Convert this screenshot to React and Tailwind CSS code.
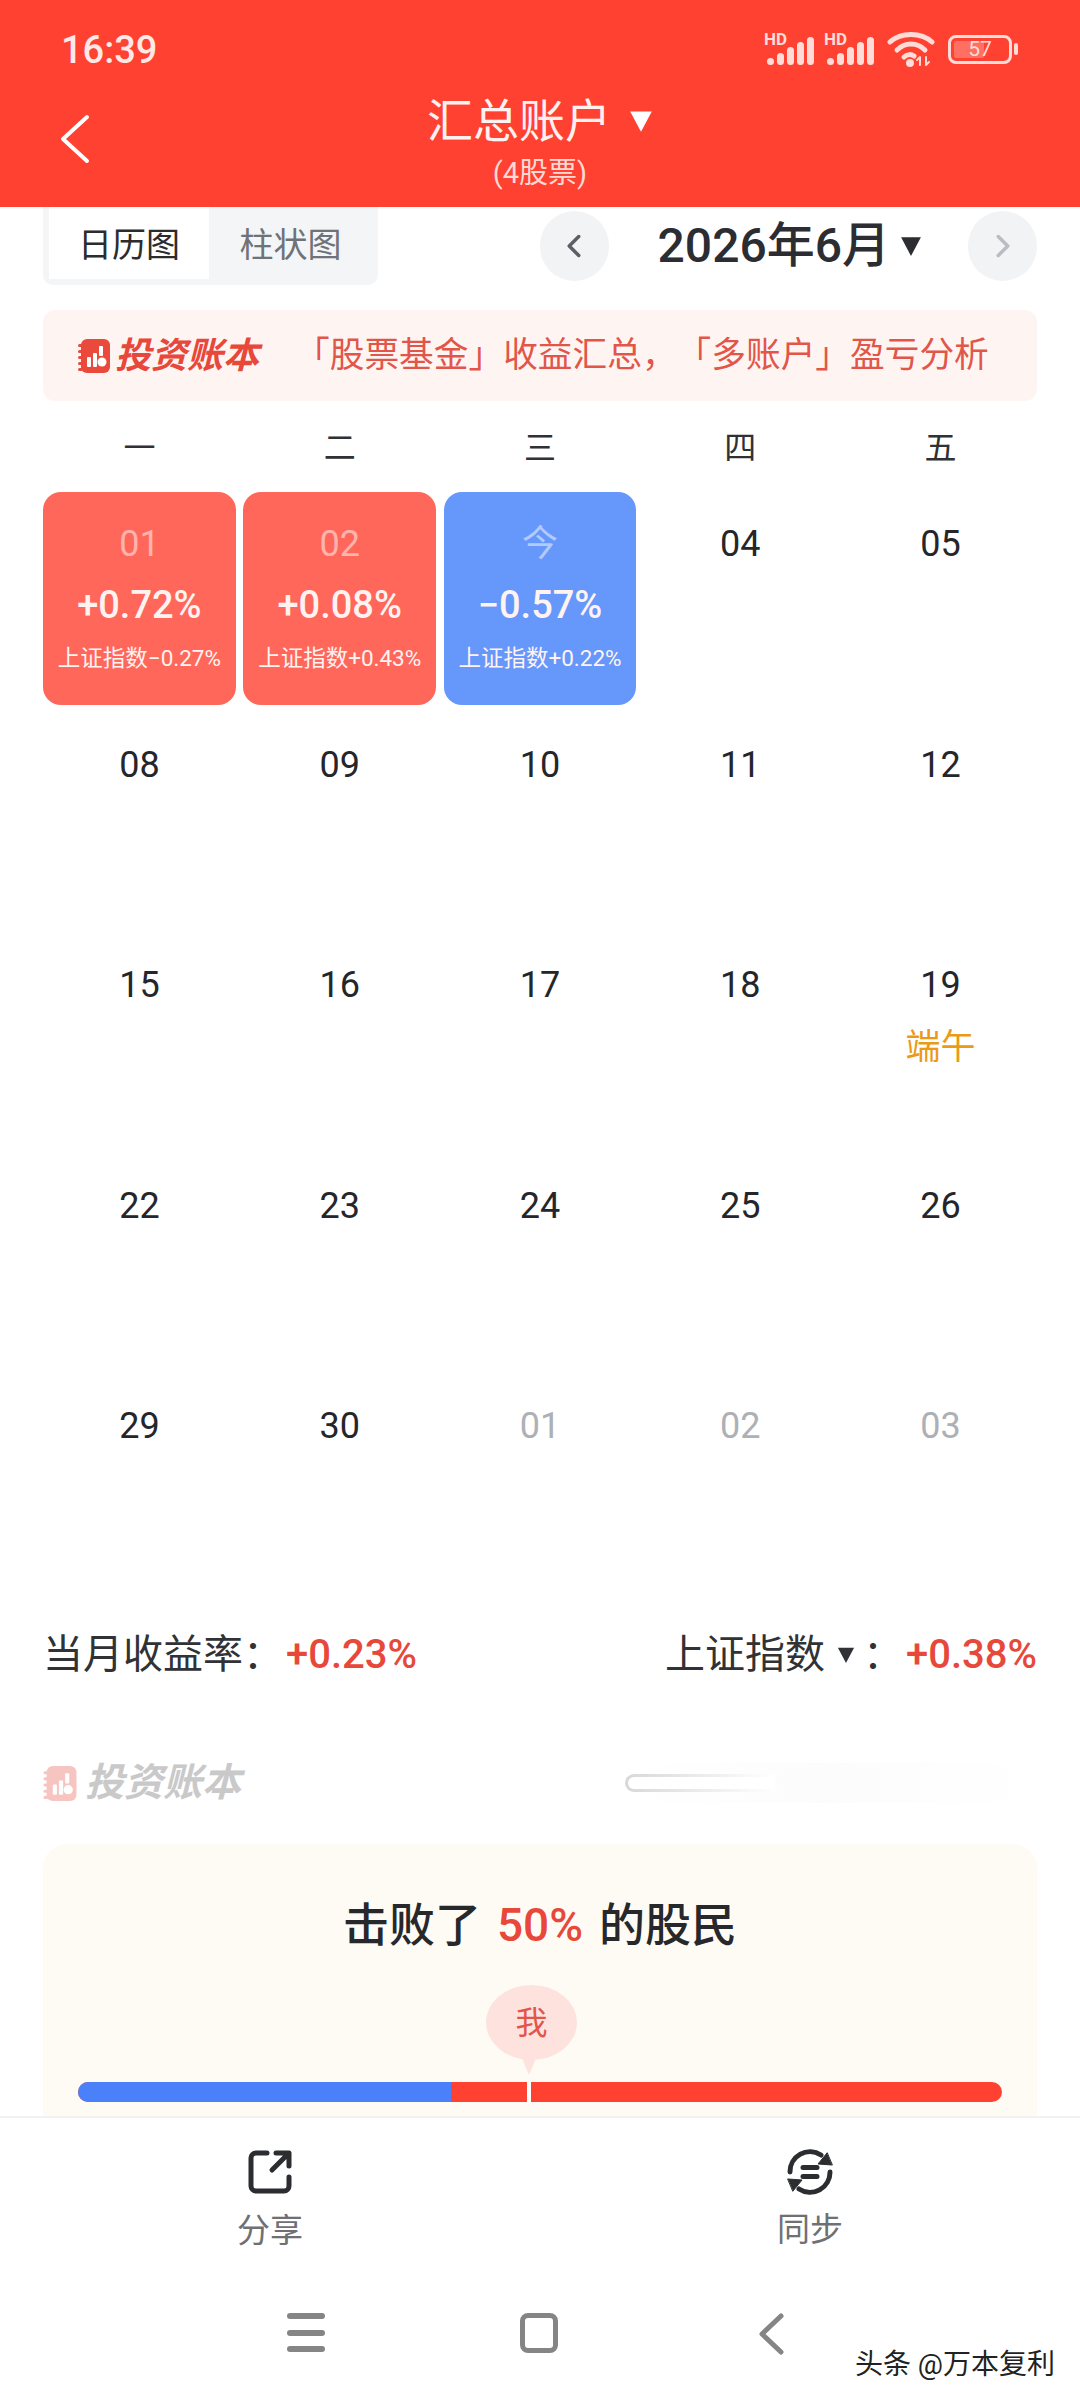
import { ChevronLeft, ChevronRight } from 'lucide-react';

const FONT = 'font-["Roboto","Noto_Sans_CJK_SC",sans-serif]';

const CARDS = [
  { day: '01', rate: '+0.72%', index: '上证指数−0.27%', color: 'bg-[#ff675b]' },
  { day: '02', rate: '+0.08%', index: '上证指数+0.43%', color: 'bg-[#ff675b]' },
  { day: '今', rate: '−0.57%', index: '上证指数+0.22%', color: 'bg-[#6697fb]' },
];

const DAYS = ['04', '05', '08', '09', '10', '11', '12', '15', '16', '17', '18', '19', '22', '23', '24', '25', '26', '29', '30'];
const NEXT = ['01', '02', '03'];

function Triangle({ className }) {
  return (
    <svg viewBox="0 0 10 10" className={className}>
      <path d="M0.5 1 H9.5 L5 9.5 Z" fill="currentColor" />
    </svg>
  );
}

function StatusBar() {
  const bars = [7, 12, 18, 23, 28];
  const signal = (
    <div className="relative h-[32px] w-[50px]">
      <span className="absolute left-0 top-[-3px] text-[17px] font-bold leading-[18px] text-[#ffdcd8]">HD</span>
      <div className="absolute bottom-0 right-0 flex items-end gap-[3px]">
        {bars.map((h) => (
          <span key={h} className="w-[7px] rounded-full bg-[#ffdcd8]" style={{ height: h }} />
        ))}
      </div>
    </div>
  );
  return (
    <div className="flex h-[72px] items-end justify-between pl-[61px] pr-[62px]">
      <span className="text-[38px] font-medium leading-[44px] text-[#ffe9e6]">16:39</span>
      <div className="flex items-center pb-[5px]">
        {signal}
        <div className="ml-[10px]">{signal}</div>
        <svg viewBox="0 0 48 36" className="ml-[13px] h-[36px] w-[48px] text-[#ffdcd8]" fill="none" stroke="currentColor" strokeWidth="5" strokeLinecap="round">
          <path d="M3 11 C14 1 34 1 45 11" />
          <path d="M10 19 C18 11 30 11 38 19" />
          <path d="M17 26 C20 23 24 23 27 25" />
          <circle cx="23" cy="32" r="1.500" fill="currentColor" />
          <path d="M33 26 V34 M30 29 L33 26 M39 26 V34 M42 31 L39 34" strokeWidth="2" />
        </svg>
        <div className="ml-[13px] flex items-center gap-[2px]">
          <div className="relative flex h-[29px] w-[64px] items-center justify-center rounded-[8px] border-[3px] border-[#ffdcd8]">
            <span className="absolute bottom-[3px] left-[3px] top-[3px] w-[30px] rounded-[2px] bg-[#ff6f62]" />
            <span className="relative text-[21px] leading-none text-[#ffdcd8]">57</span>
          </div>
          <span className="h-[12px] w-[4px] rounded-full bg-[#ffdcd8]" />
        </div>
      </div>
    </div>
  );
}

function Header() {
  return (
    <header className="relative h-[207px] shrink-0 bg-[#ff4131] text-white">
      <StatusBar />
      <svg viewBox="0 0 32 50" className="absolute left-[59px] top-[114px] h-[50px] w-[32px]" fill="none" stroke="#fff" strokeWidth="4" strokeLinecap="round" strokeLinejoin="round">
        <path d="M28 3 L4 25 L28 47" />
      </svg>
      <div className="flex flex-col items-center pt-[19px]">
        <div className="flex items-center">
          <span className="text-[46px] leading-[60px] text-[#fff1ef]">汇总账户</span>
          <Triangle className="ml-[18px] h-[24px] w-[24px] text-white" />
        </div>
        <span className="mt-[4px] text-[29px] leading-[36px] text-[#ffd9d5]">(4股票)</span>
      </div>
    </header>
  );
}

function Toolbar() {
  return (
    <div className="flex h-[78px] items-center justify-between">
      <div className="flex h-[78px] w-[335px] rounded-b-[10px] bg-[#f3f5f7] px-[6px] pb-[6px]">
        <div className="flex w-[160px] items-center justify-center bg-white pt-[5px] text-[34px] text-[#2c2c2e]">日历图</div>
        <div className="flex flex-1 items-center justify-center pt-[5px] text-[34px] text-[#6f7278]">柱状图</div>
      </div>
      <div className="flex items-center">
        <div className="flex h-[70px] w-[69px] items-center justify-center rounded-full bg-[#f2f3f5] text-[#5c5f66]">
          <ChevronLeft size={38} strokeWidth={2.2} />
        </div>
        <span className="ml-[49px] text-[48px] font-medium leading-[70px] text-[#2b2d33]">2026年6月</span>
        <Triangle className="ml-[10px] h-[22px] w-[22px] text-[#2b2d33]" />
        <div className="ml-[46px] flex h-[70px] w-[69px] items-center justify-center rounded-full bg-[#f2f3f5] text-[#b9bcc2]">
          <ChevronRight size={38} strokeWidth={2.2} />
        </div>
      </div>
    </div>
  );
}

function Logo({ muted }) {
  const fill = muted ? '#f7c5c1' : '#ea4a3c';
  return (
    <div className="flex items-center">
      <svg viewBox="0 0 32 34" className={muted ? 'h-[35px] w-[34px]' : 'h-[34px] w-[32px]'}>
        <rect x="3" y="0" width="29" height="34" rx="6" fill={fill} />
        <g fill={fill}>
          <rect x="0" y="5" width="5" height="3" rx="1.5" />
          <rect x="0" y="11" width="5" height="3" rx="1.5" />
          <rect x="0" y="17" width="5" height="3" rx="1.5" />
          <rect x="0" y="23" width="5" height="3" rx="1.5" />
          <rect x="0" y="29" width="5" height="3" rx="1.5" />
        </g>
        <g fill="#fff">
          <rect x="9" y="18" width="4" height="10" rx="1" />
          <rect x="15" y="14" width="4" height="14" rx="1" />
          <rect x="21" y="7" width="4" height="10" rx="1" />
          <circle cx="24" cy="23" r="4.5" />
        </g>
      </svg>
      <span className={muted ? 'ml-[8px] text-[39px] font-bold italic leading-none text-[#c9c9c9]' : 'ml-[5px] text-[36px] font-bold italic leading-none text-[#e8483a]'}>投资账本</span>
    </div>
  );
}

function Banner() {
  return (
    <div className="mt-[25px] flex h-[91px] items-center rounded-[12px] bg-[#fef5f3] pl-[35px]">
      <Logo />
      <span className="ml-[36px] text-[34.7px] leading-none text-[#e2564a] [text-spacing-trim:space-all]">「股票基金」收益汇总，「多账户」盈亏分析</span>
    </div>
  );
}

function Calendar() {
  return (
    <>
      <div className="mt-[26px] grid grid-cols-5 gap-x-[7.5px]">
        {['一', '二', '三', '四', '五'].map((d) => (
          <div key={d} className="h-[42px] text-center text-[32px] leading-[42px] text-[#2f3136]">{d}</div>
        ))}
      </div>
      <div className="mt-[23px] grid grid-cols-5 gap-x-[7.5px] gap-y-[7.5px]">
        {CARDS.map((c) => (
          <div key={c.day} className={`flex h-[213px] flex-col items-center rounded-[18px] pt-[30px] ${c.color}`}>
            <span className="text-[36px] leading-[44px] text-white/50">{c.day}</span>
            <span className="mt-[14px] text-[38px] font-medium leading-[50px] text-[#fff3f2]">{c.rate}</span>
            <span className="mt-[13px] text-[22.5px] leading-[30px] text-[#fff3f2]">{c.index}</span>
          </div>
        ))}
        {DAYS.map((d) => (
          <div key={d} className="relative flex h-[213px] justify-center pt-[30px] text-[36px] leading-[44px] text-[#24262b]">
            {d}
            {d === '19' && (
              <span className="absolute left-0 right-0 top-[95px] text-center text-[35px] leading-[40px] text-[#eb9a17]">端午</span>
            )}
          </div>
        ))}
        {NEXT.map((d) => (
          <div key={d} className="flex h-[213px] justify-center pt-[30px] text-[36px] leading-[44px] text-[#adb0b5]">{d}</div>
        ))}
      </div>
    </>
  );
}

function Summary() {
  return (
    <div className="mt-[40px] flex items-center justify-between text-[40px] leading-[56px] text-[#303236]">
      <div className="flex items-center">
        <span>当月收益率：</span>
        <span className="ml-[3px] font-medium text-[#e8483a]">+0.23%</span>
      </div>
      <div className="flex items-center">
        <span>上证指数</span>
        <Triangle className="ml-[12px] h-[18px] w-[18px] text-[#303236]" />
        <span className="ml-[8px] w-[40px]">：</span>
        <span className="ml-[3px] font-medium text-[#e8483a]">+0.38%</span>
      </div>
    </div>
  );
}

function WatermarkRow() {
  return (
    <div className="mt-[80px] flex h-[40px] items-center justify-between">
      <Logo muted />
      <div className="h-[40px] w-[412px] bg-gradient-to-r from-white via-[#fcfcfc] to-white pt-[11px]">
        <div className="h-[18px] w-[150px] rounded-l-full bg-gradient-to-r from-[#d8d8d8] to-white py-[3px] pl-[3px]">
          <div className="h-full rounded-l-full bg-white" />
        </div>
      </div>
    </div>
  );
}

function BeatCard() {
  return (
    <div className="mt-[41px] rounded-t-[24px] bg-[#fefbf5] px-[35px] pb-[14px]">
      <h2 className="flex h-[162px] items-center justify-center text-[46px] font-medium leading-none text-[#26282c]">
        击败了<span className="mx-[16px] text-[#e8483a]">50%</span>的股民
      </h2>
      <div className="relative mt-[76px] h-[20px]">
        <div className="absolute bottom-[42px] left-[408px] flex h-[75px] w-[91px] items-center justify-center rounded-[50%] bg-[#fde2de] text-[32px] text-[#e2564a]">
          我
        </div>
        <div className="absolute bottom-[27px] left-[441px] h-0 w-0 border-x-[10px] border-t-[24px] border-x-transparent border-t-[#fde2de]" />
        <div className="relative flex h-[20px] overflow-hidden rounded-full bg-[#ff4131]">
          <span className="h-full w-[373px] bg-[#4a80fa]" />
          <span className="ml-[76px] h-full w-[4px] bg-white" />
        </div>
      </div>
    </div>
  );
}

function BottomBar() {
  return (
    <footer className="shrink-0 border-t-2 border-[#f1f1f1] bg-white">
      <div className="grid h-[157px] grid-cols-2">
        <div className="flex flex-col items-center pt-[32px]">
          <svg viewBox="0 0 44 44" className="h-[44px] w-[44px]" fill="none" stroke="#2b2d30" strokeWidth="5" strokeLinecap="round" strokeLinejoin="round">
            <path d="M19 3 H8 a5 5 0 0 0 -5 5 V36 a5 5 0 0 0 5 5 H36 a5 5 0 0 0 5 -5 V27" />
            <path d="M24 20 L40 4 M28 3 H41 V16" />
          </svg>
          <span className="mt-[15px] text-[33px] leading-[44px] text-[#6e7074]">分享</span>
        </div>
        <div className="flex flex-col items-center pt-[31px]">
          <svg viewBox="0 0 46 46" className="h-[46px] w-[46px]" fill="none" stroke="#2b2d30" strokeWidth="5" strokeLinecap="round" strokeLinejoin="round">
            <path d="M3 23 A20 20 0 0 1 34 6" />
            <path d="M43 23 A20 20 0 0 1 12 40" />
            <path d="M45 16 L31 15 L40 4 Z M1 30 L15 31 L6 42 Z" fill="#2b2d30" strokeWidth="1" />
            <path d="M16 18.500 H30 M16 27.500 H30" />
          </svg>
          <span className="mt-[13px] text-[33px] leading-[44px] text-[#6e7074]">同步</span>
        </div>
      </div>
      <div className="relative flex h-[125px] items-start pl-[287px] pt-[38px]">
        <div className="flex h-[39px] w-[38px] flex-col justify-between">
          <span className="h-[6px] rounded-full bg-[#858585]" />
          <span className="h-[6px] rounded-full bg-[#858585]" />
          <span className="h-[6px] rounded-full bg-[#858585]" />
        </div>
        <div className="ml-[195px] h-[40px] w-[38px] rounded-[8px] border-[5px] border-[#858585]" />
        <svg viewBox="0 0 26 42" className="ml-[200px] h-[42px] w-[26px]" fill="none" stroke="#858585" strokeWidth="5" strokeLinecap="round" strokeLinejoin="round">
          <path d="M23 3 L4 21 L23 39" />
        </svg>
        <span className="absolute bottom-[17px] right-[25px] text-[28px] leading-[36px] text-[#222]">头条 @万本复利</span>
      </div>
    </footer>
  );
}

export default function App() {
  return (
    <div className={`flex h-[2400px] w-[1080px] flex-col overflow-hidden bg-white ${FONT}`}>
      <Header />
      <main className="min-h-0 flex-1 overflow-hidden px-[43px]">
        <Toolbar />
        <Banner />
        <Calendar />
        <Summary />
        <WatermarkRow />
        <BeatCard />
      </main>
      <BottomBar />
    </div>
  );
}
